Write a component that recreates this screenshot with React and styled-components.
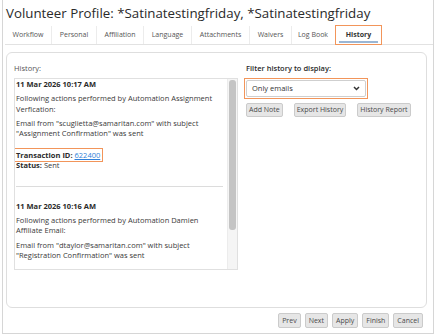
import React from "react";
import styled, { createGlobalStyle } from "styled-components";

const Global = createGlobalStyle`
  html, body { margin: 0; padding: 0; background: #fff; }
  body { font-family: "Open Sans", "Liberation Sans", sans-serif; color: #333; }
  * { box-sizing: border-box; }
`;

const ORANGE = "#f2955a";

const Frame = styled.div`
  margin-left: 2px;
  width: 432px;
  height: 334px;
  border: 1px solid #d6d6d6;
  border-top: none;
  display: flex;
  flex-direction: column;
`;

const Title = styled.h1`
  margin: 0;
  padding: 4px 0 0 3px;
  font-size: 13.3px;
  line-height: 18px;
  font-weight: 400;
  color: #2a2a2a;
  white-space: nowrap;
`;

const TabBar = styled.div`
  display: flex;
  margin: 4px 0 0 2px;
  border-bottom: 1px solid #e2e2e2;
  height: 19px;
`;

const Tab = styled.div`
  position: relative;
  width: ${(p) => p.$w}px;
  height: 18px;
  font-size: 7px;
  line-height: 18px;
  text-align: center;
  color: ${(p) => (p.$active ? "#333" : "#555")};
  font-weight: ${(p) => (p.$active ? 700 : 400)};
  white-space: nowrap;
  border-right: ${(p) => (p.$last ? "none" : "1px solid #ececec")};
  outline: ${(p) => (p.$active ? `1.5px solid ${ORANGE}` : "none")};
  margin-left: ${(p) => (p.$active ? "2px" : "0")};
  &::after {
    content: "";
    display: ${(p) => (p.$active ? "block" : "none")};
    position: absolute;
    left: 3px;
    right: 3px;
    bottom: 1px;
    height: 2px;
    background: #9ab6d4;
  }
`;

const Card = styled.div`
  margin: 7px 6px 0 3px;
  border: 1px solid #dedede;
  border-radius: 6px;
  padding: 10px 7px 37px 7px;
  display: flex;
  align-items: flex-start;
`;

const LeftCol = styled.div`
  width: 224px;
  display: flex;
  flex-direction: column;
`;

const Label = styled.div`
  font-size: 7.5px;
  line-height: 10.5px;
  color: ${(p) => (p.$dark ? "#2a2a2a" : "#555")};
  font-weight: ${(p) => (p.$dark ? 600 : 400)};
  white-space: nowrap;
`;

const ListBox = styled.div`
  margin-top: 4px;
  height: 192px;
  border: 1px solid #e0e0e0;
  display: flex;
`;

const ListContent = styled.div`
  flex: 1;
  overflow: hidden;
`;

const ScrollTrack = styled.div`
  width: 10px;
  flex-shrink: 0;
  background: #f5f5f5;
  border-left: 1px solid #ececec;
  padding: 1px 1px 0 1px;
`;

const ScrollThumb = styled.div`
  height: 150px;
  border-radius: 3px;
  background: #c4c4c4;
`;

const Entry = styled.div`
  margin: 0 4px 0 1px;
  padding: ${(p) => (p.$first ? "0 0 15px 0" : "14.5px 0 0 0")};
  border-top: ${(p) => (p.$first ? "none" : "1px solid #dcdcdc")};
  font-size: 7.5px;
  line-height: 10.5px;
  color: #3a3a3a;
`;

const EntryDate = styled.div`
  font-weight: 700;
  color: #2a2a2a;
`;

const Para = styled.div`
  margin-top: ${(p) => p.$gap}px;
`;

const Bold = styled.span`
  font-weight: 700;
  color: #2a2a2a;
`;

const Highlight = styled.span`
  display: inline-block;
  outline: 1.5px solid ${ORANGE};
  outline-offset: 1px;
  padding-right: 1px;
`;

const Link = styled.a`
  color: #2f7fd8;
  text-decoration: underline;
`;

const RightCol = styled.div`
  margin-left: 8px;
  display: flex;
  flex-direction: column;
`;

const SelectWrap = styled.div`
  margin: 4px 0 0 -2px;
  width: 124px;
  padding: 1px;
  border: 1.5px solid ${ORANGE};
`;

const SelectBox = styled.div`
  height: 17px;
  border: 1px solid #cfcfcf;
  border-radius: 2px;
  background: #fff;
  display: flex;
  align-items: center;
  justify-content: space-between;
  padding: 0 5px 0 5px;
  font-size: 7.5px;
  color: #333;
`;

const ButtonRow = styled.div`
  display: flex;
  gap: ${(p) => p.$gap}px;
  margin-top: ${(p) => p.$top}px;
  justify-content: ${(p) => (p.$end ? "flex-end" : "flex-start")};
  padding-right: ${(p) => (p.$end ? "10px" : "0")};
`;

const Button = styled.button`
  height: ${(p) => p.$h || 14}px;
  padding: 0 ${(p) => p.$pad || 2}px;
  font-family: "Open Sans", "Liberation Sans", sans-serif;
  font-size: 7px;
  line-height: 1;
  color: #4a4a4a;
  background: #e6e6e6;
  border: 1px solid #cbcbcb;
  border-radius: 2px;
  white-space: nowrap;
`;

const tabs = [
  ["Workflow", 47],
  ["Personal", 45],
  ["Affiliation", 47],
  ["Language", 48],
  ["Attachments", 58],
  ["Waivers", 42],
  ["Log Book", 42],
];

export default function App() {
  return (
    <>
      <Global />
      <Frame>
        <Title>Volunteer Profile: *Satinatestingfriday, *Satinatestingfriday</Title>
        <TabBar>
          {tabs.map(([t, w], i) => (
            <Tab key={t} $w={w} $last={i === tabs.length - 1}>{t}</Tab>
          ))}
          <Tab $active $last $w={45}>History</Tab>
        </TabBar>
        <Card>
          <LeftCol>
            <Label>History:</Label>
            <ListBox>
              <ListContent>
                <Entry $first>
                  <EntryDate>11 Mar 2026 10:17 AM</EntryDate>
                  <Para $gap={4}>Following actions performed by Automation Assignment Verfication:</Para>
                  <Para $gap={3.5}>Email from "scuglietta@samaritan.com" with subject "Assignment Confirmation" was sent</Para>
                  <Para $gap={11}>
                    <Highlight><Bold>Transaction ID:</Bold> <Link href="#">622400</Link></Highlight>
                  </Para>
                  <div><Bold>Status:</Bold> Sent</div>
                </Entry>
                <Entry>
                  <EntryDate>11 Mar 2026 10:16 AM</EntryDate>
                  <Para $gap={3}>Following actions performed by Automation Damien Affiliate Email:</Para>
                  <Para $gap={4}>Email from "dtaylor@samaritan.com" with subject "Registration Confirmation" was sent</Para>
                </Entry>
              </ListContent>
              <ScrollTrack>
                <ScrollThumb />
              </ScrollTrack>
            </ListBox>
          </LeftCol>
          <RightCol>
            <Label $dark>Filter history to display:</Label>
            <SelectWrap>
              <SelectBox>
                <span>Only emails</span>
                <svg width="7" height="5" viewBox="0 0 7 5">
                  <polyline points="1,1 3.5,3.5 6,1" fill="none" stroke="#333" strokeWidth="1.5" />
                </svg>
              </SelectBox>
            </SelectWrap>
            <ButtonRow $gap={11} $top={4}>
              <Button>Add Note</Button>
              <Button>Export History</Button>
              <Button>History Report</Button>
            </ButtonRow>
          </RightCol>
        </Card>
        <ButtonRow $end $gap={4} $top={5}>
          <Button $h={15} $pad={3}>Prev</Button>
          <Button $h={15} $pad={3}>Next</Button>
          <Button $h={15} $pad={3}>Apply</Button>
          <Button $h={15} $pad={3}>Finish</Button>
          <Button $h={15} $pad={3}>Cancel</Button>
        </ButtonRow>
      </Frame>
    </>
  );
}
